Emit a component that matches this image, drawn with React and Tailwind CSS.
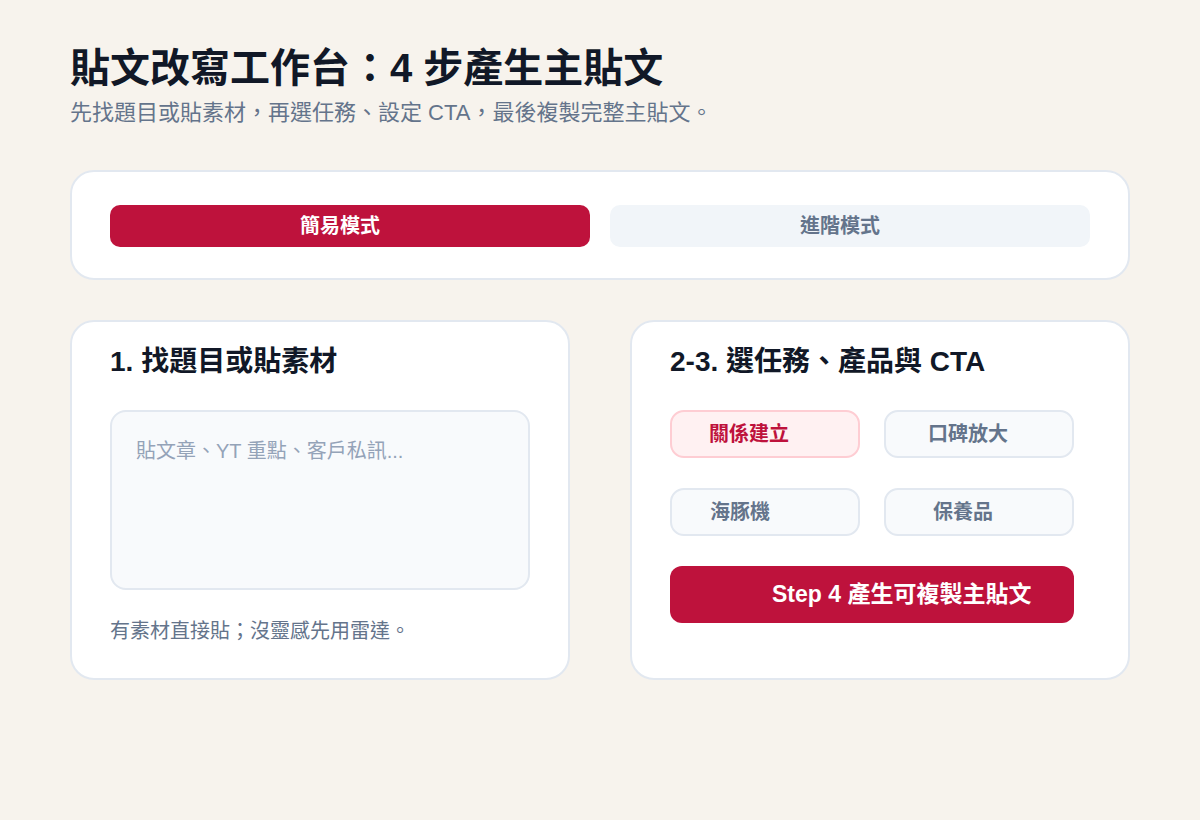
import React, { useState } from 'react';

const tasks = [
  { id: 'relation', label: '關係建立', pad: 'pl-[37px]' },
  { id: 'review', label: '口碑放大', pad: 'pl-[42px]' },
];

const products = [
  { id: 'dolphin', label: '海豚機', pad: 'pl-[38px]' },
  { id: 'care', label: '保養品', pad: 'pl-[47px]' },
];

const OptionButton = ({ item, active, onClick }) => (
  <button
    onClick={onClick}
    className={`h-[48px] w-[190px] rounded-[14px] border-2 flex items-center ${item.pad} text-[20px] font-bold leading-none ${
      active
        ? 'bg-[#fff1f2] border-[#fecdd3] text-[#be123c]'
        : 'bg-[#f8fafc] border-[#e2e8f0] text-[#64748b]'
    }`}
  >
    {item.label}
  </button>
);

const App = () => {
  const [mode, setMode] = useState('simple');
  const [task, setTask] = useState('relation');
  const [product, setProduct] = useState(null);

  return (
    <div className="min-h-[820px] bg-[#f7f3ed] px-[70px] pt-[44px] font-['Liberation_Sans','Noto_Sans_CJK_TC',sans-serif]">
      <h1 className="text-[40px] leading-[48px] font-bold text-[#111827]">貼文改寫工作台：4 步產生主貼文</h1>
      <p className="mt-[6px] text-[22px] leading-[30px] text-[#64748b]">
        先找題目或貼素材，再選任務、設定 CTA，最後複製完整主貼文。
      </p>

      <div className="mt-[42px] bg-white border-2 border-[#e2e8f0] rounded-3xl px-[38px] pt-[33px] pb-[31px]">
        <div className="grid grid-cols-2 gap-[20px]">
          <button
            onClick={() => setMode('simple')}
            className={`h-[42px] rounded-[10px] pr-[20px] text-[20px] font-bold ${
              mode === 'simple' ? 'bg-[#be123c] text-white' : 'bg-[#f1f5f9] text-[#64748b]'
            }`}
          >
            簡易模式
          </button>
          <button
            onClick={() => setMode('advanced')}
            className={`h-[42px] rounded-[10px] pr-[20px] text-[20px] font-bold ${
              mode === 'advanced' ? 'bg-[#be123c] text-white' : 'bg-[#f1f5f9] text-[#64748b]'
            }`}
          >
            進階模式
          </button>
        </div>
      </div>

      <div className="mt-[40px] grid grid-cols-2 gap-[60px]">
        <div className="bg-white border-2 border-[#e2e8f0] rounded-3xl px-[38px] pt-[22px] pb-[32px]">
          <h2 className="text-[28px] leading-[36px] font-bold text-[#111827]">1. 找題目或貼素材</h2>
          <textarea
            placeholder="貼文章、YT 重點、客戶私訊..."
            className="mt-[30px] block w-full h-[180px] resize-none rounded-2xl border-2 border-[#e2e8f0] bg-[#f8fafc] p-6 text-[20px] leading-[30px] text-[#111827] placeholder:text-[#94a3b8] outline-none"
          />
          <p className="mt-[26px] text-[20px] leading-[30px] text-[#64748b]">有素材直接貼；沒靈感先用雷達。</p>
        </div>

        <div className="bg-white border-2 border-[#e2e8f0] rounded-3xl px-[38px] pt-[22px] pb-[32px]">
          <h2 className="text-[28px] leading-[36px] font-bold text-[#111827]">2-3. 選任務、產品與 CTA</h2>
          <div className="mt-[30px] grid grid-cols-[190px_190px] gap-x-[24px] gap-y-[30px]">
            {tasks.map((t) => (
              <OptionButton key={t.id} item={t} active={task === t.id} onClick={() => setTask(t.id)} />
            ))}
            {products.map((p) => (
              <OptionButton key={p.id} item={p} active={product === p.id} onClick={() => setProduct(p.id)} />
            ))}
          </div>
          <button className="mt-[30px] h-[57px] w-[404px] rounded-[12px] bg-[#be123c] text-white text-[23px] font-bold flex items-center pl-[102px]">
            Step 4 產生可複製主貼文
          </button>
        </div>
      </div>
    </div>
  );
};

export default App;
